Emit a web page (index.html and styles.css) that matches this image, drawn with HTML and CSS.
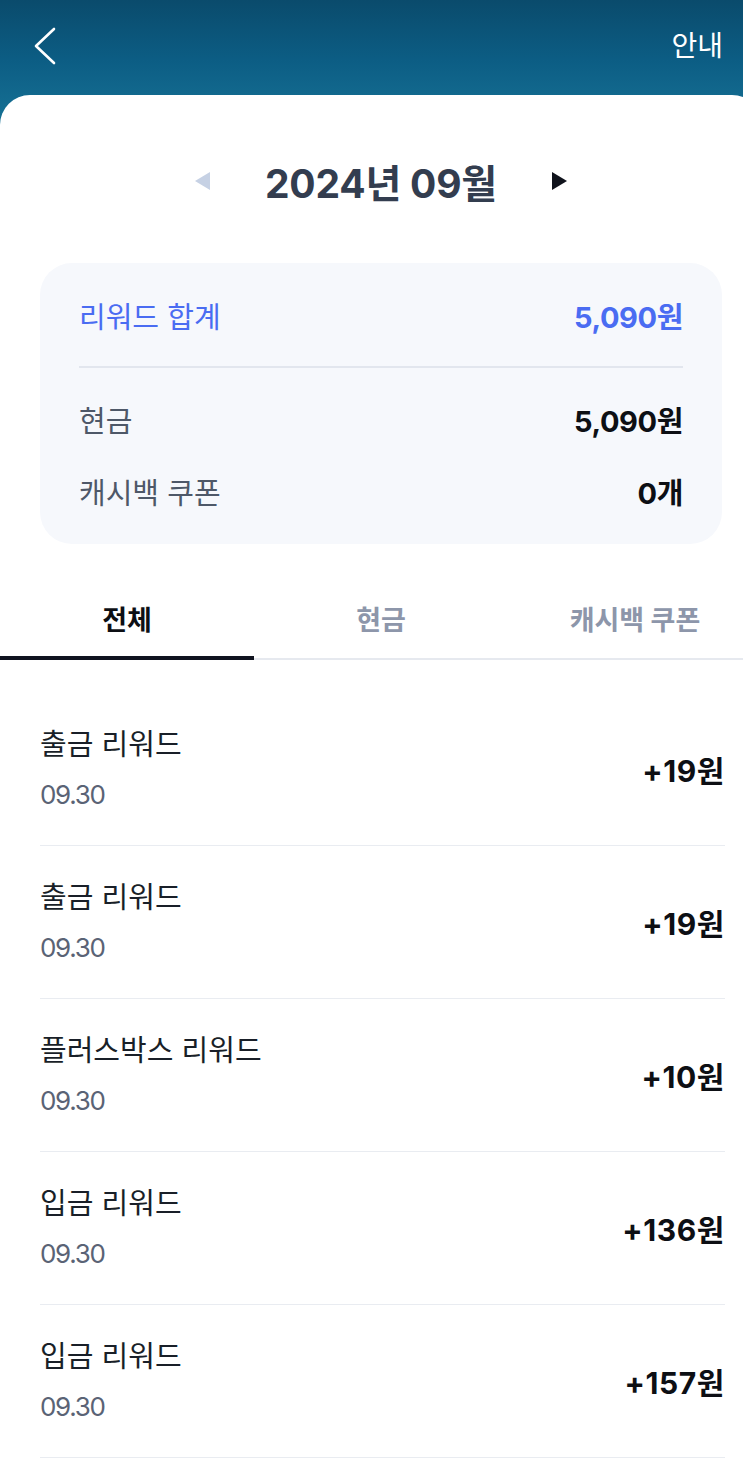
FILE: index.html
```html
<!DOCTYPE html>
<html lang="ko">
<head>
  <meta charset="UTF-8" />
  <meta name="viewport" content="width=device-width, initial-scale=1.0">
  <title>리워드 내역</title>
  <link rel="stylesheet" href="styles.css">
</head>
<body>
  <div class="page">
    <header class="topbar">
      <button class="back" aria-label="뒤로">
        <svg width="24" height="38" viewBox="0 0 24 38">
          <polyline points="21,2 3,19 21,36" fill="none" stroke="#fff" stroke-width="2.6" stroke-linecap="round" stroke-linejoin="round"/>
        </svg>
      </button>
      <span class="info">안내</span>
    </header>

    <main class="sheet">
      <div class="month-nav">
        <span class="tri tri-left"></span>
        <h2>2024년 09월</h2>
        <span class="tri tri-right"></span>
      </div>

      <section class="summary">
        <div class="sum-row total">
          <span>리워드 합계</span>
          <strong>5,090원</strong>
        </div>
        <div class="sum-line"></div>
        <div class="sum-row">
          <span>현금</span>
          <strong>5,090원</strong>
        </div>
        <div class="sum-row">
          <span>캐시백 쿠폰</span>
          <strong>0개</strong>
        </div>
      </section>

      <nav class="tabs">
        <a class="tab active">전체</a>
        <a class="tab">현금</a>
        <a class="tab">캐시백 쿠폰</a>
      </nav>

      <ul class="history">
        <li class="item">
          <div>
            <p class="title">출금 리워드</p>
            <p class="date">09.30</p>
          </div>
          <span class="amount">+19원</span>
        </li>
        <li class="item">
          <div>
            <p class="title">출금 리워드</p>
            <p class="date">09.30</p>
          </div>
          <span class="amount">+19원</span>
        </li>
        <li class="item">
          <div>
            <p class="title">플러스박스 리워드</p>
            <p class="date">09.30</p>
          </div>
          <span class="amount">+10원</span>
        </li>
        <li class="item">
          <div>
            <p class="title">입금 리워드</p>
            <p class="date">09.30</p>
          </div>
          <span class="amount">+136원</span>
        </li>
        <li class="item">
          <div>
            <p class="title">입금 리워드</p>
            <p class="date">09.30</p>
          </div>
          <span class="amount">+157원</span>
        </li>
      </ul>
    </main>
  </div>
</body>
</html>
```

FILE: styles.css
```css
* {
  box-sizing: border-box;
}

body {
  margin: 0;
  overflow: hidden;
  background: #fff;
  font-family: "Inter", "Noto Sans CJK KR", sans-serif;
  color: #191f28;
}

.page {
  width: 762px;
  background: linear-gradient(180deg, #0a4b6c 0%, #0c5d84 60px, #19779a 140px, #19779a 100%);
}

.topbar {
  height: 95px;
  display: flex;
  align-items: flex-start;
  justify-content: space-between;
  padding: 27px 39px 0 33px;
}

.back {
  background: none;
  border: none;
  padding: 0;
  height: 38px;
  display: flex;
  align-items: center;
}

.info {
  color: #fff;
  font-size: 28px;
  line-height: 38px;
}

.sheet {
  background: #fff;
  border-radius: 30px 30px 0 0;
  padding-top: 53px;
  min-height: 1400px;
}

.month-nav {
  display: flex;
  align-items: center;
  justify-content: center;
  gap: 55px;
  height: 66px;
}

.month-nav h2 {
  margin: 0;
  font-size: 39px;
  font-weight: 700;
  color: #333d4f;
  letter-spacing: -0.2px;
}

.tri {
  width: 0;
  height: 0;
  border-top: 9px solid transparent;
  border-bottom: 9px solid transparent;
}

.tri-left {
  border-right: 15px solid #c6d1e4;
}

.tri-right {
  border-left: 15px solid #10131c;
}

.summary {
  margin: 49px 40px 0;
  background: #f6f8fc;
  border-radius: 32px;
  padding: 33px 39px 34px;
}

.sum-row {
  display: flex;
  justify-content: space-between;
  align-items: center;
  height: 38px;
  font-size: 29px;
  color: #4e5868;
}

.sum-row + .sum-row {
  margin-top: 34px;
}

.sum-row strong {
  color: #0d0f14;
  font-weight: 700;
  letter-spacing: -0.4px;
}

.sum-row.total,
.sum-row.total strong {
  color: #4a6cf2;
}

.sum-line {
  height: 2px;
  background: #e2e6ee;
  margin: 32px 0 32px;
}

.tabs {
  display: flex;
  margin-top: 40px;
  border-bottom: 2px solid #e6e9ef;
}

.tab {
  flex: 1;
  text-align: center;
  font-size: 27px;
  font-weight: 700;
  color: #8d96aa;
  height: 74px;
  line-height: 74px;
  position: relative;
}

.tab.active {
  color: #0d0f14;
}

.tab.active::after {
  content: "";
  position: absolute;
  left: 0;
  right: 0;
  bottom: -2px;
  height: 4px;
  background: #10131f;
}

.history {
  list-style: none;
  margin: 0;
  padding: 33px 37px 0 40px;
}

.item {
  display: flex;
  justify-content: space-between;
  align-items: center;
  padding: 33px 0 33px;
  border-bottom: 1.5px solid #e9ecf1;
}

.item .title {
  margin: 0;
  font-size: 29px;
  line-height: 38px;
  color: #191f28;
}

.item .date {
  margin: 14px 0 0;
  font-size: 26px;
  line-height: 34px;
  color: #5a6375;
  letter-spacing: -1.3px;
}

.amount {
  font-size: 30px;
  font-weight: 700;
  color: #0d0f14;
  letter-spacing: 0.6px;
}
```
